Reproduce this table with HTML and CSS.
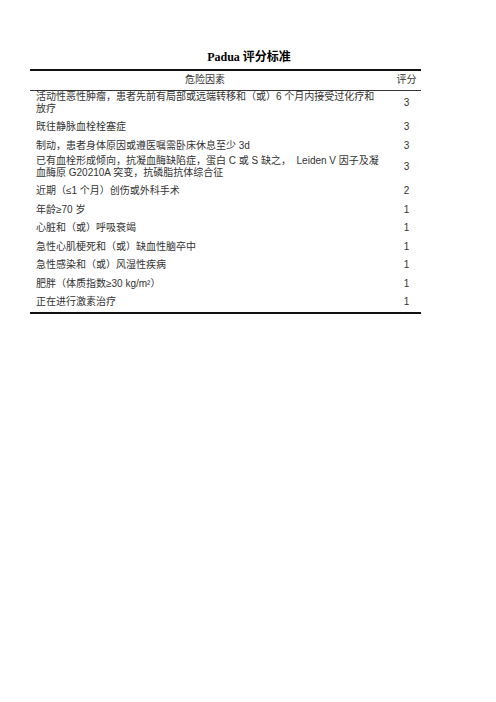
FILE: index.html
```html
<!DOCTYPE html>
<html lang="zh-CN">
<head>
<meta charset="utf-8">
<title>Padua 评分标准</title>
<link rel="stylesheet" href="styles.css">
</head>
<body>
<div class="page">
  <div class="title">Padua 评分标准</div>
  <div class="table">
    <div class="row head">
      <div class="factor">危险因素</div>
      <div class="score">评分</div>
    </div>
    <div class="row two">
      <div class="factor"><span class="line">活动性恶性肿瘤，患者先前有局部或远端转移和（或）6 个月内接受过化疗和</span><span class="line">放疗</span></div>
      <div class="score">3</div>
    </div>
    <div class="row">
      <div class="factor">既往静脉血栓栓塞症</div>
      <div class="score">3</div>
    </div>
    <div class="row">
      <div class="factor">制动，患者身体原因或遵医嘱需卧床休息至少 3d</div>
      <div class="score">3</div>
    </div>
    <div class="row two">
      <div class="factor"><span class="line">已有血栓形成倾向，抗凝血酶缺陷症，蛋白 C 或 S 缺之，&nbsp; Leiden V 因子及凝</span><span class="line">血酶原 G20210A 突变，抗磷脂抗体综合征</span></div>
      <div class="score">3</div>
    </div>
    <div class="row">
      <div class="factor">近期（≤1 个月）创伤或外科手术</div>
      <div class="score">2</div>
    </div>
    <div class="row">
      <div class="factor">年龄≥70 岁</div>
      <div class="score">1</div>
    </div>
    <div class="row">
      <div class="factor">心脏和（或）呼吸衰竭</div>
      <div class="score">1</div>
    </div>
    <div class="row">
      <div class="factor">急性心肌梗死和（或）缺血性脑卒中</div>
      <div class="score">1</div>
    </div>
    <div class="row">
      <div class="factor">急性感染和（或）风湿性疾病</div>
      <div class="score">1</div>
    </div>
    <div class="row">
      <div class="factor">肥胖（体质指数≥30 kg/m²）</div>
      <div class="score">1</div>
    </div>
    <div class="row">
      <div class="factor">正在进行激素治疗</div>
      <div class="score">1</div>
    </div>
  </div>
</div>
</body>
</html>
```
FILE: styles.css
```css
html, body {
  margin: 0;
  padding: 0;
  background: #fff;
}

.page {
  width: 496px;
  padding-top: 50px;
}

.title {
  text-align: center;
  font-family: "Liberation Serif", "Noto Sans CJK SC", serif;
  font-weight: bold;
  font-size: 12px;
  line-height: 14px;
  color: #000;
  padding-left: 2px;
}

.table {
  margin: 5px 0 0 30px;
  width: 391px;
  border-top: 2px solid #111;
  border-bottom: 2px solid #111;
  font-family: "Liberation Sans", "Noto Sans CJK SC", sans-serif;
  font-size: 10px;
  line-height: 12px;
  color: #333;
}

.row {
  display: grid;
  grid-template-columns: 362px 29px;
  height: 18.5px;
  align-items: center;
}

.row.two {
  height: 27px;
  padding-bottom: 3px;
  box-sizing: border-box;
}

.row.head {
  height: 19px;
  padding-bottom: 2px;
  box-sizing: border-box;
  border-bottom: 1px solid #333;
  height: 20px;
}

.factor {
  padding: 0 18px 0 6px;
  white-space: nowrap;
}

.factor .line {
  display: block;
}

.head .factor {
  text-align: center;
}

.score {
  text-align: center;
}
```
